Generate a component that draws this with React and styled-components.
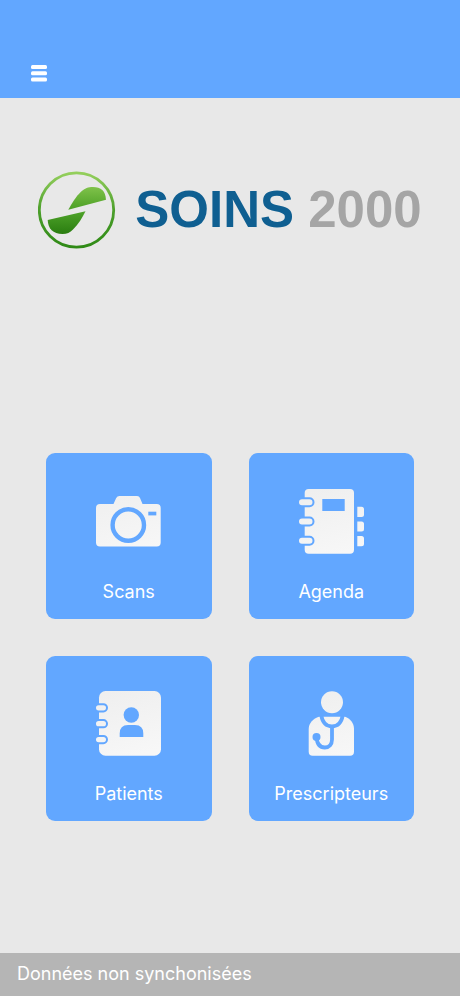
import React from 'react';
import styled, { createGlobalStyle } from 'styled-components';

const BLUE = '#62a7ff';

const GlobalStyle = createGlobalStyle`
  * {
    box-sizing: border-box;
  }

  body {
    background-color: #e8e8e8;
    font-family: Inter, 'Liberation Sans', sans-serif;
    margin: 0;
  }
`;

const Page = styled.div`
  display: flex;
  flex-direction: column;
  min-height: 100vh;
`;

const Header = styled.header`
  background-color: ${BLUE};
  display: flex;
  padding: 60px 26px 12px;
`;

const MenuButton = styled.button`
  align-items: center;
  background: none;
  border: 0;
  cursor: pointer;
  display: flex;
  height: 26px;
  justify-content: center;
  padding: 0;
  width: 26px;
`;

const Main = styled.main`
  flex: 1;
  padding-bottom: 40px;
`;

const Brand = styled.h1`
  align-items: center;
  display: flex;
  font-family: 'Liberation Sans', Arial, sans-serif;
  font-size: 51px;
  gap: 19px;
  justify-content: center;
  line-height: 78px;
  margin: 73px 0 204px;
  white-space: nowrap;
`;

const BrandName = styled.span`
  color: #0f5f91;
`;

const BrandYear = styled.span`
  color: #a5a5a5;
`;

const Tiles = styled.nav`
  display: grid;
  gap: 37px;
  grid-template-columns: 1fr 1fr;
  padding: 0 10%;
`;

const Tile = styled.a`
  align-items: center;
  aspect-ratio: 1;
  background-color: ${BLUE};
  border-radius: 9px;
  color: #fff;
  display: flex;
  flex-direction: column;
  gap: 26px;
  justify-content: center;
  padding-top: 21px;
  text-decoration: none;
`;

const TileLabel = styled.span`
  font-size: 18px;
  line-height: 24px;
`;

const Status = styled.footer`
  background-color: #b5b5b5;
  color: #fff;
  font-size: 18px;
  line-height: 24px;
  padding: 9px 17px 10px;
`;

function Emblem() {
  return (
    <svg width="78" height="78" viewBox="0 0 78 78" aria-hidden="true">
      <defs>
        <linearGradient id="ring" x1="0" y1="0" x2="0" y2="1">
          <stop offset="0" stopColor="#94cf5c" />
          <stop offset="0.5" stopColor="#4c9f2b" />
          <stop offset="1" stopColor="#2f8a16" />
        </linearGradient>
        <linearGradient id="leafTop" x1="0" y1="0" x2="0" y2="1">
          <stop offset="0" stopColor="#7fc24a" />
          <stop offset="1" stopColor="#4c9f25" />
        </linearGradient>
        <linearGradient id="leafBottom" x1="0" y1="0" x2="0" y2="1">
          <stop offset="0" stopColor="#4fa32a" />
          <stop offset="1" stopColor="#2a7d10" />
        </linearGradient>
      </defs>
      <circle cx="38.5" cy="39" r="37.2" fill="none" stroke="url(#ring)" strokeWidth="2.8" />
      <path
        d="M30.3 38.7C34 32 38 25.5 43 20.8C47 17.2 50 16 55 16C63 16 67.5 20 68 28.7Z"
        fill="url(#leafTop)"
      />
      <path
        d="M47.5 40.2C44.5 46.5 40 53.5 35 58.5C32 61.5 29 63 24.5 63C15 63 10 57.5 9.7 49Z"
        fill="url(#leafBottom)"
      />
    </svg>
  );
}

function MenuIcon() {
  return (
    <svg width="18" height="18" viewBox="0 0 18 18" fill="#fff" aria-hidden="true">
      <rect x="1" y="1" width="16" height="4" rx="1.5" />
      <rect x="1" y="7.2" width="16" height="4" rx="1.5" />
      <rect x="1" y="13.4" width="16" height="4" rx="1.5" />
    </svg>
  );
}

function TileIcon({ children }) {
  return (
    <svg width="65" height="65" viewBox="0 0 65 65" fill="url(#paper)" aria-hidden="true">
      <defs>
        <linearGradient id="paper" gradientUnits="userSpaceOnUse" x1="20" y1="0" x2="40" y2="65">
          <stop offset="0" stopColor="#efefef" />
          <stop offset="1" stopColor="#f7f7f7" />
        </linearGradient>
      </defs>
      {children}
    </svg>
  );
}

function BinderRings({ tops, width, height }) {
  return tops.map(top => (
    <rect
      key={top}
      x="-1"
      y={top}
      width={width}
      height={height}
      rx={height / 2}
      stroke={BLUE}
      strokeWidth="2"
    />
  ));
}

function CameraIcon() {
  return (
    <TileIcon>
      <path d="M4 15H17.5L20.2 9Q21.2 7 23.5 7H41Q43.3 7 44 9L46.5 15H60.7Q64.7 15 64.7 19V53.5Q64.7 57.5 60.7 57.5H4Q0 57.5 0 53.5V19Q0 15 4 15Z" />
      <circle cx="32.3" cy="36" r="15.7" fill="none" stroke={BLUE} strokeWidth="4.4" />
      <rect x="52.3" y="22.7" width="8" height="3.7" fill={BLUE} />
    </TileIcon>
  );
}

function AgendaIcon() {
  return (
    <TileIcon>
      <rect x="5.7" y="0" width="49.3" height="64.7" rx="4" />
      <rect x="23.3" y="10" width="22.4" height="12" fill={BLUE} />
      <path d="M58.3 17.8H62.5Q65 17.8 65 20.3V25.5Q65 28 62.5 28H58.3Z" />
      <path d="M58.3 32.4H62.5Q65 32.4 65 34.9V40.1Q65 42.6 62.5 42.6H58.3Z" />
      <path d="M58.3 47H62.5Q65 47 65 49.5V54.7Q65 57.2 62.5 57.2H58.3Z" />
      <BinderRings tops={[9.2, 28.5, 47.8]} width={15.5} height={8} />
    </TileIcon>
  );
}

function PatientsIcon() {
  return (
    <TileIcon>
      <rect x="3" y="0" width="62" height="64.7" rx="6.5" />
      <circle cx="35.3" cy="24" r="7.7" fill={BLUE} />
      <path d="M23.7 46V42.5Q23.7 34 32 34H39Q47.3 34 47.3 42.5V46Z" fill={BLUE} />
      <BinderRings tops={[13.2, 29.1, 45]} width={12} height={7.2} />
    </TileIcon>
  );
}

function DoctorIcon() {
  return (
    <TileIcon>
      <circle cx="33" cy="11.3" r="11" />
      <path d="M20 25.7H46C51 27.5 55 32 55 38V60.7Q55 64.7 51 64.7H13.7Q9.7 64.7 9.7 60.7V38C9.7 32 14.5 27.5 20 25.7Z" />
      <g fill="none" stroke={BLUE} strokeWidth="3.8">
        <path d="M22.3 24.5C23.5 31.5 27.5 35.3 33 35.3S42.5 31.5 43.7 24.5" />
        <path d="M33 35.5V48.5C33 53.5 30 56.5 25.8 56.5C20.5 56.5 18 52.5 17.5 46" />
      </g>
      <circle cx="17.5" cy="46" r="4" fill={BLUE} />
    </TileIcon>
  );
}

const sections = [
  { name: 'Scans', href: '#scans', Icon: CameraIcon },
  { name: 'Agenda', href: '#agenda', Icon: AgendaIcon },
  { name: 'Patients', href: '#patients', Icon: PatientsIcon },
  { name: 'Prescripteurs', href: '#prescripteurs', Icon: DoctorIcon }
];

function App() {
  return (
    <Page>
      <GlobalStyle />
      <Header>
        <MenuButton type="button" aria-label="Menu">
          <MenuIcon />
        </MenuButton>
      </Header>
      <Main>
        <Brand>
          <Emblem />
          <span>
            <BrandName>SOINS</BrandName> <BrandYear>2000</BrandYear>
          </span>
        </Brand>
        <Tiles>
          {sections.map(({ name, href, Icon }) => (
            <Tile key={name} href={href}>
              <Icon />
              <TileLabel>{name}</TileLabel>
            </Tile>
          ))}
        </Tiles>
      </Main>
      <Status>Données non synchonisées</Status>
    </Page>
  );
}

export default App;
